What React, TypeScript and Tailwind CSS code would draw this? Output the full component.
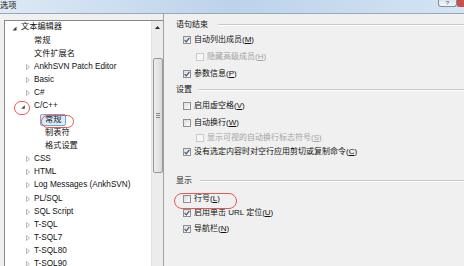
import React from 'react';

type Kind = 'open' | 'closed' | 'leaf';

interface TreeRow {
  label: string;
  kind: Kind;
  pad: string;
  selected?: boolean;
}

const rows: TreeRow[] = [
  { label: '文本编辑器', kind: 'open', pad: 'pl-[7px]' },
  { label: '常规', kind: 'leaf', pad: 'pl-[29px]' },
  { label: '文件扩展名', kind: 'leaf', pad: 'pl-[29px]' },
  { label: 'AnkhSVN Patch Editor', kind: 'closed', pad: 'pl-[21px]' },
  { label: 'Basic', kind: 'closed', pad: 'pl-[21px]' },
  { label: 'C#', kind: 'closed', pad: 'pl-[21px]' },
  { label: 'C/C++', kind: 'open', pad: 'pl-[16px]' },
  { label: '常规', kind: 'leaf', pad: 'pl-[35px]', selected: true },
  { label: '制表符', kind: 'leaf', pad: 'pl-[35px]' },
  { label: '格式设置', kind: 'leaf', pad: 'pl-[35px]' },
  { label: 'CSS', kind: 'closed', pad: 'pl-[21px]' },
  { label: 'HTML', kind: 'closed', pad: 'pl-[21px]' },
  { label: 'Log Messages (AnkhSVN)', kind: 'closed', pad: 'pl-[21px]' },
  { label: 'PL/SQL', kind: 'closed', pad: 'pl-[21px]' },
  { label: 'SQL Script', kind: 'closed', pad: 'pl-[21px]' },
  { label: 'T-SQL', kind: 'closed', pad: 'pl-[21px]' },
  { label: 'T-SQL7', kind: 'closed', pad: 'pl-[21px]' },
  { label: 'T-SQL80', kind: 'closed', pad: 'pl-[21px]' },
  { label: 'T-SQL90', kind: 'closed', pad: 'pl-[21px]' },
];

const Arrow: React.FC<{ kind: Kind }> = ({ kind }) => {
  if (kind === 'open') {
    return (
      <span className="w-[9px] h-full flex items-center">
        <svg width="5" height="5" viewBox="0 0 5 5" className="mt-[1px]">
          <path d="M4.5 0.5 L4.5 4.5 L0.5 4.5 Z" fill="#404040" />
        </svg>
      </span>
    );
  }
  if (kind === 'closed') {
    return (
      <span className="w-[8px] h-full flex items-center">
        <svg width="4" height="6" viewBox="0 0 4 6">
          <path d="M0.5 0.5 L3.5 3 L0.5 5.5 Z" fill="none" stroke="#a6a6a6" strokeWidth="0.8" />
        </svg>
      </span>
    );
  }
  return null;
};

const Tree: React.FC = () => (
  <div className="ml-[4px] mt-[6px] w-[160px] h-[260px] border border-[#828790] bg-white flex text-[8.2px]">
    <div className="flex-1">
      {rows.map((r, i) => (
        <div key={i} className={`h-[13.17px] flex items-center ${r.pad} text-[#111]`}>
          {r.kind === 'open' && r.label === 'C/C++' ? (
            <span className="w-[13px] h-full flex items-center">
              <svg width="4" height="4" viewBox="0 0 4 4" className="mt-[1px]">
                <path d="M3.8 0.2 L3.8 3.8 L0.2 3.8 Z" fill="#404040" />
              </svg>
            </span>
          ) : (
            <Arrow kind={r.kind} />
          )}
          {r.selected ? (
            <span className="h-[12px] px-[4px] flex items-center border border-[#7da2ce] bg-[#dcebfc] rounded-[2px]">
              {r.label}
            </span>
          ) : (
            <span className={r.kind === 'leaf' && r.pad === 'pl-[35px]' ? 'pl-[5px] whitespace-nowrap' : 'whitespace-nowrap'}>
              {r.label}
            </span>
          )}
        </div>
      ))}
    </div>
    <div className="w-[12px] bg-[#ececec] border-l border-[#e2e2e2] flex flex-col items-center">
      <div className="h-[12px] flex items-center justify-center">
        <svg width="5" height="3" viewBox="0 0 5 3">
          <path d="M0 3 L2.5 0 L5 3 Z" fill="#2a2a2a" />
        </svg>
      </div>
      <div className="mt-[25px] w-[10px] h-[115px] border border-[#979797] rounded-[2px] bg-gradient-to-r from-[#eeeeee] to-[#d9d9d9] flex flex-col items-center justify-center gap-[1px]">
        <div className="w-[4px] h-px bg-[#8a8a8a]" />
        <div className="w-[4px] h-px bg-[#8a8a8a]" />
        <div className="w-[4px] h-px bg-[#8a8a8a]" />
      </div>
    </div>
  </div>
);

const Check: React.FC<{ checked?: boolean; disabled?: boolean }> = ({ checked, disabled }) => (
  <span
    className={`w-[8px] h-[8px] shrink-0 border flex items-center justify-center ${
      disabled ? 'border-[#cbcbcb] bg-[#f6f6f6]' : 'border-[#8e8f8f] bg-gradient-to-br from-[#dcdcdc] to-[#fbfbfb]'
    }`}
  >
    {checked && (
      <svg width="6" height="6" viewBox="0 0 6 6">
        <path d="M0.6 3.1 L2.3 4.9 L5.4 0.9" fill="none" stroke="#3b528a" strokeWidth="1.2" />
      </svg>
    )}
  </span>
);

const Key: React.FC<{ k: string }> = ({ k }) => (
  <>
    (<span className="underline underline-offset-1">{k}</span>)
  </>
);

interface OptProps {
  h: string;
  text: string;
  k: string;
  checked?: boolean;
  disabled?: boolean;
  indent?: boolean;
}

const Opt: React.FC<OptProps> = ({ h, text, k, checked, disabled, indent }) => (
  <div className={`${h} flex items-center gap-[3px] ${indent ? 'pl-[32px]' : 'pl-[19px]'} ${disabled ? 'text-[#a3a3a3]' : 'text-[#111]'} whitespace-nowrap`}>
    <Check checked={checked} disabled={disabled} />
    <span>
      {text}
      <Key k={k} />
    </span>
  </div>
);

const Header: React.FC<{ h: string; text: string; gap: string }> = ({ h, text, gap }) => (
  <div className={`${h} flex items-center pl-[12px] text-[#111]`}>
    <span className="whitespace-nowrap">{text}</span>
    <div className={`flex-1 ${gap} h-px bg-[#c9c9c9] border-b border-white box-content`} />
  </div>
);

const Options: React.FC = () => (
  <div className="flex-1 pt-[5px] border-l border-[#a0a0a0] ml-[-1px] text-[8px]">
    <Header h="h-[12px]" text="语句结束" gap="ml-[10px]" />
    <Opt h="h-[18px]" text="自动列出成员" k="M" checked />
    <Opt h="h-[16px]" text="隐藏高级成员" k="H" disabled indent />
    <Opt h="h-[18px]" text="参数信息" k="P" checked />
    <Header h="h-[14px]" text="设置" gap="ml-[6px]" />
    <Opt h="h-[18px]" text="启用虚空格" k="V" />
    <Opt h="h-[16px]" text="自动换行" k="W" />
    <Opt h="h-[14px]" text="显示可视的自动换行标志符号" k="S" disabled indent />
    <Opt h="h-[14px]" text="没有选定内容时对空行应用剪切或复制命令" k="C" checked />
    <div className="h-[16px]" />
    <Header h="h-[12px]" text="显示" gap="ml-[8px]" />
    <div className="h-[4px]" />
    <Opt h="h-[16px]" text="行号" k="L" />
    <Opt h="h-[12px]" text="启用单击 URL 定位" k="U" checked />
    <Opt h="h-[20px]" text="导航栏" k="N" checked />
  </div>
);

export default function App() {
  return (
    <div className="relative w-[464px] h-[266px] overflow-hidden bg-[#f0f0f0] text-[8.2px] leading-none font-['Liberation_Sans','Noto_Sans_CJK_SC',sans-serif]">
      <div className="h-[14px] border-b border-[#9aa8b8] bg-gradient-to-r from-[#dde9f5] via-[#bcd3ea] to-[#d4e4f3] flex items-start justify-between">
        <span className="pt-[2px] text-[#111]">选项</span>
        <div className="flex">
          <div className="w-[19px] h-[7px] border border-t-0 border-[#7f8ea3] rounded-b-[3px] bg-gradient-to-b from-[#dbe4ee] to-[#f3f6f9] flex items-end justify-center text-[6px] text-[#4b5563]">
            ?
          </div>
          <div className="w-[7px] h-[7px] bg-[#c9514a] rounded-bl-[2px]" />
        </div>
      </div>
      <div className="flex">
        <Tree />
        <Options />
      </div>
      <div className="absolute left-[14px] top-[101px] w-[16px] h-[14px] rounded-full border border-[#e45a52]" />
      <div className="absolute left-[41px] top-[115px] w-[33px] h-[13px] rounded-full border border-[#e45a52]" />
      <div className="absolute left-[174px] top-[193px] w-[63px] h-[16px] rounded-full border border-[#e45a52]" />
    </div>
  );
}
